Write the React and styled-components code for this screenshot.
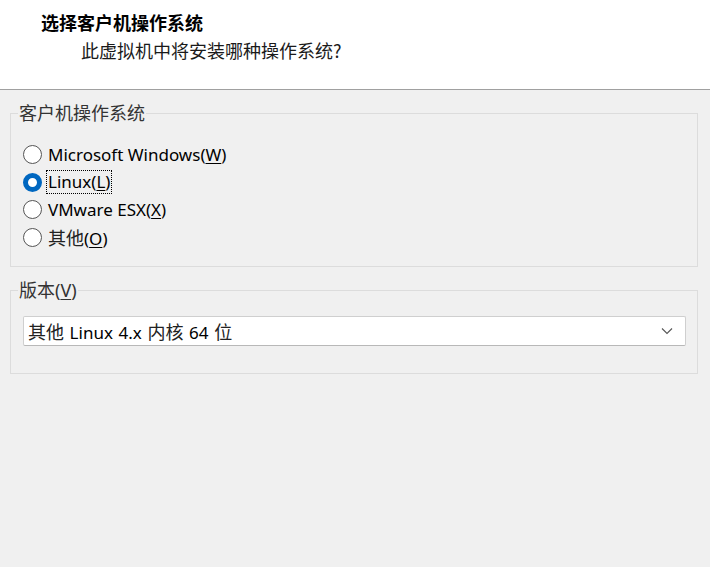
import React from 'react';
import styled, { createGlobalStyle } from 'styled-components';

const Global = createGlobalStyle`
  html, body { margin: 0; padding: 0; background: #f0f0f0; }
  body { width: 710px; height: 567px; overflow: hidden; }
`

const Page = styled.div`
  width: 710px;
  height: 567px;
  background: #f0f0f0;
  font-family: "Noto Sans", "Noto Sans CJK SC", sans-serif;
  color: #000;
`

const Header = styled.div`
  height: 90px;
  background: #fff;
  border-bottom: 1px solid #a0a0a0;
  padding-left: 41px;
  padding-top: 10px;
  box-sizing: border-box;
`

const Title = styled.div`
  font-family: "Noto Sans CJK SC", sans-serif;
  font-weight: bold;
  font-size: 18px;
  line-height: 24px;
`

const Subtitle = styled.div`
  font-family: "Noto Sans CJK SC", sans-serif;
  font-size: 18px;
  line-height: 24px;
  margin-top: 4px;
  padding-left: 40px;
  color: #1a1a1a;
`

const Body = styled.div`
  padding: 11px 12px 0 10px;
  display: flex;
  flex-direction: column;
  gap: 11px;
`

const Group = styled.fieldset`
  margin: 0;
  border: 1px solid #dcdcdc;
  padding: ${p => p.$pad};
  min-width: 0;
`

const Legend = styled.legend`
  padding: 0 1px;
  margin-left: -5px;
  font-family: "Noto Sans", "Noto Sans CJK SC", sans-serif;
  font-size: 18px;
  line-height: 24px;
  color: #333;
`

const RadioList = styled.div`
  display: flex;
  flex-direction: column;
`

const RadioRow = styled.label`
  display: flex;
  align-items: center;
  height: 27.6px;
  gap: 4px;
`

const Circle = styled.span`
  width: 19px;
  height: 19px;
  box-sizing: border-box;
  border-radius: 50%;
  border: ${p => (p.$on ? '5.5px solid #0067c0' : '1px solid #555')};
  background: #fff;
  flex: none;
`

const RadioText = styled.span`
  font-size: 17px;
  line-height: 22px;
  padding: 0 1px;
  border: 1px dotted ${p => (p.$focus ? '#000' : 'transparent')};
`

const Cjk = styled.span`
  font-family: "Noto Sans CJK SC", sans-serif;
  font-size: 18px;
  color: #222;
`

const U = styled.span`
  text-decoration: underline;
  text-underline-offset: 2px;
`

const SelectBox = styled.div`
  height: 30px;
  box-sizing: border-box;
  background: #fff;
  border: 1px solid #cfcfcf;
  border-bottom-color: #b8b8b8;
  border-radius: 2px;
  display: flex;
  align-items: center;
  justify-content: space-between;
  padding: 0 12px 0 4px;
  font-size: 17px;
  word-spacing: 1.2px;
`

const Chevron = () => (
  <svg width="12" height="8" viewBox="0 0 12 8">
    <path d="M1 1.5 L6 6.5 L11 1.5" fill="none" stroke="#555" strokeWidth="1.1" />
  </svg>
)

export default function App() {
  const options = [
    { label: 'Microsoft Windows', key: 'W' },
    { label: 'Linux', key: 'L', on: true },
    { label: 'VMware ESX', key: 'X' },
    { label: <Cjk>其他</Cjk>, key: 'O' },
  ]
  return (
    <Page>
      <Global />
      <Header>
        <Title>选择客户机操作系统</Title>
        <Subtitle>此虚拟机中将安装哪种操作系统?</Subtitle>
      </Header>
      <Body>
        <Group $pad="16px 12px 15px 12px">
          <Legend>客户机操作系统</Legend>
          <RadioList>
            {options.map(o => (
              <RadioRow key={o.key}>
                <Circle $on={o.on} />
                <RadioText $focus={o.on}>
                  {o.label}(<U>{o.key}</U>)
                </RadioText>
              </RadioRow>
            ))}
          </RadioList>
        </Group>
        <Group $pad="14px 11px 27px 12px">
          <Legend>版本(<U>V</U>)</Legend>
          <SelectBox>
            <span>
              <Cjk>其他</Cjk> Linux 4.x <Cjk>内核</Cjk> 64 <Cjk>位</Cjk>
            </span>
            <Chevron />
          </SelectBox>
        </Group>
      </Body>
    </Page>
  )
}
